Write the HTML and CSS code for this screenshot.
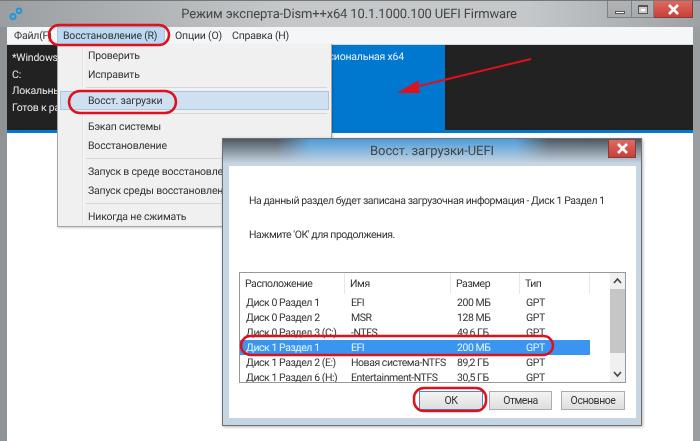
FILE: index.html
```html
<!DOCTYPE html>
<html lang="en">
<head>
    <meta charset="UTF-8">
    <title>Dism++ UEFI</title>
    <link rel="stylesheet" href="styles.css">
</head>
<body>

    <div class="window">
        <div class="titlebar">
            <svg class="app-icon" width="14" height="14" viewBox="0 0 14 14">
                <circle cx="4" cy="9.5" r="2.6" fill="none" stroke="#1f97de" stroke-width="2"/>
                <circle cx="10" cy="3.8" r="2.3" fill="none" stroke="#1f97de" stroke-width="1.8"/>
            </svg>
            <span class="title">Режим эксперта-Dism++x64 10.1.1000.100 UEFI Firmware</span>
            <div class="controls">
                <div class="ctl min"><span class="min-glyph"></span></div>
                <div class="ctl max"><span class="max-glyph"></span></div>
                <div class="ctl close">
                    <svg width="13" height="11" viewBox="0 0 13 11"><path d="M2 1l9 9M11 1l-9 9" stroke="#fff" stroke-width="2.6"/></svg>
                </div>
            </div>
        </div>

        <div class="menubar">
            <span class="menu-item file">Файл(F)</span>
            <span class="menu-item active">Восстановление (R)</span>
            <span class="menu-item options">Опции (O)</span>
            <span class="menu-item">Справка (H)</span>
        </div>

        <div class="sessions">
            <div class="session-info">
                <p>*Windows 8.1</p>
                <p>C:</p>
                <p>Локальный диск</p>
                <p>Готов к работе</p>
            </div>
            <div class="session-blue">Профессиональная x64</div>
            <div class="session-rest"></div>
        </div>

        <div class="content"></div>
    </div>

    <div class="popup">
        <div class="popup-item">Проверить</div>
        <div class="popup-item">Исправить</div>
        <div class="popup-sep"></div>
        <div class="popup-item hover">Восст. загрузки</div>
        <div class="popup-sep"></div>
        <div class="popup-item">Бэкап системы</div>
        <div class="popup-item">Восстановление</div>
        <div class="popup-sep"></div>
        <div class="popup-item">Запуск в среде восстановления</div>
        <div class="popup-item">Запуск среды восстановления</div>
        <div class="popup-sep"></div>
        <div class="popup-item">Никогда не сжимать</div>
    </div>

    <div class="dialog">
        <div class="dialog-title">
            <span>Восст. загрузки-UEFI</span>
            <div class="dialog-close">
                <svg width="13" height="11" viewBox="0 0 13 11"><path d="M2 1l9 9M11 1l-9 9" stroke="#fff" stroke-width="2.6"/></svg>
            </div>
        </div>
        <div class="dialog-body">
            <p class="dialog-text first">На данный раздел будет записана загрузочная информация - Диск 1 Раздел 1</p>
            <p class="dialog-text second">Нажмите 'ОК' для продолжения.</p>

            <div class="list">
                <div class="list-main">
                    <div class="row head">
                        <span>Расположение</span><span>Имя</span><span>Размер</span><span>Тип</span>
                    </div>
                    <div class="row"><span>Диск 0 Раздел 1</span><span>EFI</span><span>200 МБ</span><span>GPT</span></div>
                    <div class="row"><span>Диск 0 Раздел 2</span><span>MSR</span><span>128 МБ</span><span>GPT</span></div>
                    <div class="row"><span>Диск 0 Раздел 3 (C:)</span><span>-NTFS</span><span>49,6 ГБ</span><span>GPT</span></div>
                    <div class="row selected"><span>Диск 1 Раздел 1</span><span>EFI</span><span>200 МБ</span><span>GPT</span></div>
                    <div class="row"><span>Диск 1 Раздел 2 (E:)</span><span>Новая система-NTFS</span><span>89,2 ГБ</span><span>GPT</span></div>
                    <div class="row"><span>Диск 1 Раздел 6 (H:)</span><span>Entertainment-NTFS</span><span>30,5 ГБ</span><span>GPT</span></div>
                </div>
                <div class="scrollbar">
                    <svg width="15" height="16" viewBox="0 0 15 16"><path d="M4 10l3.5-4L11 10" fill="none" stroke="#444" stroke-width="1.6"/></svg>
                    <div class="thumb"></div>
                    <svg class="arrow-down" width="15" height="16" viewBox="0 0 15 16"><path d="M4 6l3.5 4L11 6" fill="none" stroke="#444" stroke-width="1.6"/></svg>
                </div>
            </div>

            <div class="buttons">
                <button class="btn ok">ОК</button>
                <button class="btn cancel">Отмена</button>
                <button class="btn">Основное</button>
            </div>
        </div>
    </div>

    <!-- red marks drawn on top of the screenshot -->
    <svg class="marks" width="700" height="441" viewBox="0 0 700 441">
        <rect x="49" y="25" width="120" height="20" rx="10" class="mark"/>
        <rect x="69" y="91" width="107" height="22" rx="11" class="mark"/>
        <rect x="241" y="336" width="312" height="19" rx="9.5" class="mark"/>
        <rect x="414" y="388" width="72" height="23" rx="10" class="mark"/>
        <path d="M531 59L415 87" stroke="#e0101c" stroke-width="2" fill="none"/>
        <path d="M397 93L419 80L418 86L420 93Z" fill="#e0101c"/>
    </svg>

</body>
</html>
```

FILE: styles.css
```css
* {
    box-sizing: border-box;
}

html, body {
    margin: 0;
    height: 441px;
    overflow: hidden;
}

body {
    position: relative;
    width: 700px;
    font-family: 'Roboto', 'Noto Sans', sans-serif;
    font-size: 10.5px;
    letter-spacing: -0.2px;
    text-rendering: geometricPrecision;
    color: #333;
    background: #fff;
    filter: blur(0.3px);
}

p {
    margin: 0;
}

.window {
    display: flex;
    flex-direction: column;
    height: 441px;
    padding: 0 7px;
    background: linear-gradient(to right, #8f9396 0, #a9adb0 50%, #9a9ea1 100%);
}

.titlebar {
    display: flex;
    align-items: center;
    height: 27px;
    margin: 0 -7px;
    padding: 0 7px 0 9px;
    background: linear-gradient(to right, #9a9ea1, #c4c8ca 40%, #c4c8ca 75%, #9ea2a5);
    border-top: 1px solid #777;
}

.app-icon {
    flex: none;
}

.title {
    flex: 1;
    padding-left: 68px;
    text-align: center;
    font-size: 13px;
    letter-spacing: -0.15px;
    color: #454545;
    white-space: nowrap;
}

.controls {
    display: flex;
    flex: none;
    align-self: flex-start;
}

.ctl {
    display: flex;
    align-items: center;
    justify-content: center;
    height: 17px;
    background: linear-gradient(#b0b4b6, #a6aaac);
    border: 1px solid #7d8184;
    border-top: none;
    border-left: none;
}

.ctl.min {
    width: 25px;
    border-left: 1px solid #7d8184;
}

.ctl.max {
    width: 22px;
}

.min-glyph {
    width: 10px;
    height: 3px;
    margin-top: 6px;
    background: #fff;
    border: 1px solid #555;
}

.max-glyph {
    width: 10px;
    height: 9px;
    background: #fff;
    border: 1px solid #555;
    border-top-width: 2px;
    box-shadow: inset 0 0 0 2px #ccc;
}

.ctl.close {
    width: 39px;
    background: linear-gradient(#e06a60, #c6403a);
    border-color: #8a3a36;
}

.menubar {
    display: flex;
    align-items: center;
    height: 17px;
    background: #f5f6f8;
}

.menu-item {
    padding: 0 6px;
    white-space: nowrap;
}

.menu-item.file {
    width: 50px;
    padding-left: 7px;
    overflow: hidden;
}

.menu-item.active {
    width: 108px;
    height: 17px;
    line-height: 16px;
    background: #bcd9f3;
    border: 1px solid #a9c8e6;
    border-bottom: none;
    padding: 0 0 0 5px;
}

.menu-item.options {
    width: 61px;
    padding-left: 10px;
}

.sessions {
    display: flex;
    height: 89px;
    background: #0078cf;
    padding-bottom: 3px;
    border-top: 1px solid #d5d8da;
}

.session-info {
    width: 190px;
    padding: 4px 5px 0;
    color: #e8e8e8;
    background: #222;
    overflow: hidden;
    white-space: nowrap;
}

.session-info p {
    height: 16.6px;
    line-height: 17px;
}

.session-blue {
    flex: none;
    width: 248px;
    padding: 5px 41px 0 0;
    text-align: right;
    color: #e8f2fa;
    background: #0078cf;
}

.session-rest {
    flex: 1;
    background: #222;
}

.content {
    flex: 1;
    background: #fff;
}

.popup {
    position: absolute;
    left: 57px;
    top: 44px;
    width: 275px;
    height: 183px;
    padding: 2px;
    background: linear-gradient(to right, #f0f0f0 24px, #e2e3e3 24px, #e2e3e3 25px, #fff 25px, #f0f0f0 26px);
    border: 1px solid #a5a5a5;
    border-top: none;
    box-shadow: 1px 1px 2px rgba(0, 0, 0, 0.2);
}

.popup-item {
    height: 19px;
    line-height: 19px;
    padding-left: 28px;
    white-space: nowrap;
    overflow: hidden;
}

.popup-item.hover {
    line-height: 17px;
    background: #cfe0f1;
    border: 1px solid #a9c6e4;
    padding-left: 27px;
}

.popup-sep {
    height: 1px;
    margin: 3px 2px 3px 26px;
    background: #d7d7d7;
}

.dialog {
    position: absolute;
    left: 222px;
    top: 138px;
    width: 420px;
    height: 288px;
    padding: 0 5px 7px 6px;
    background: #c6d5e2;
    border: 1px solid #6e7072;
    box-shadow: 1px 1px 3px rgba(0, 0, 0, 0.3);
}

.dialog-title {
    position: relative;
    height: 27px;
    margin: 0 -5px 0 -6px;
    line-height: 26px;
    text-align: center;
    font-size: 13px;
    letter-spacing: -0.1px;
    color: #444;
    background: linear-gradient(to right, #3f4a54 0, #3f4a54 13%, #3f95d8 21%, #3f95d8 70%, #3f4a54 78%, #3a444e 100%);
}

.dialog-title::after {
    content: "";
    position: absolute;
    inset: 0;
    background: linear-gradient(rgba(198, 213, 226, 0.1), #c6d5e2 90%);
}

.dialog-title span {
    position: relative;
    z-index: 1;
}

.dialog-close {
    position: absolute;
    z-index: 1;
    display: flex;
    align-items: center;
    justify-content: center;
    top: 1px;
    right: 5px;
    width: 28px;
    height: 18px;
    background: linear-gradient(#e06a60, #c6403a);
    border: 1px solid #8a3a36;
    border-top: none;
}

.dialog-body {
    height: 252px;
    padding: 0 10px;
    letter-spacing: -0.45px;
    background: #fff;
}

.dialog-text {
    padding-left: 10px;
    line-height: 16px;
    white-space: nowrap;
}

.dialog-text.first {
    padding-top: 27px;
}

.dialog-text.second {
    margin-top: 18px;
}

.list {
    display: flex;
    height: 111px;
    margin-top: 29px;
    border: 1px solid #8f9aa3;
    overflow: hidden;
}

.list-main {
    flex: 1;
}

.row {
    display: grid;
    grid-template-columns: 105px 106px 69px 70px;
    width: 350px;
    height: 15px;
    line-height: 15px;
    white-space: nowrap;
}

.row span {
    padding-left: 6px;
}

.row.head {
    height: 21px;
    line-height: 21px;
    margin-bottom: 1px;
}

.row.head span {
    border-right: 1px solid #e6e8ea;
    padding-left: 5px;
}

.row.selected {
    color: #e9f4ff;
    background: #3a95f0;
}

.scrollbar {
    display: flex;
    flex: none;
    flex-direction: column;
    width: 15px;
    background: #f0f0f0;
}

.thumb {
    height: 64px;
    background: #c6c6c6;
}

.arrow-down {
    margin-top: auto;
}

.buttons {
    display: flex;
    justify-content: flex-end;
    gap: 6px;
    margin-top: 8px;
    padding-right: 1px;
}

.btn {
    width: 64px;
    height: 19px;
    padding: 0;
    font: inherit;
    letter-spacing: inherit;
    color: #333;
    background: linear-gradient(#f3f3f3, #dedede);
    border: 1px solid #acacac;
}

.btn.ok {
    border-color: #3a8cd8;
}

.btn.cancel {
    width: 63px;
}

.btn:last-child {
    margin-left: 3px;
}

.marks {
    position: absolute;
    left: 0;
    top: 0;
}

.mark {
    fill: none;
    stroke: #e0101c;
    stroke-width: 2.5;
}
```
